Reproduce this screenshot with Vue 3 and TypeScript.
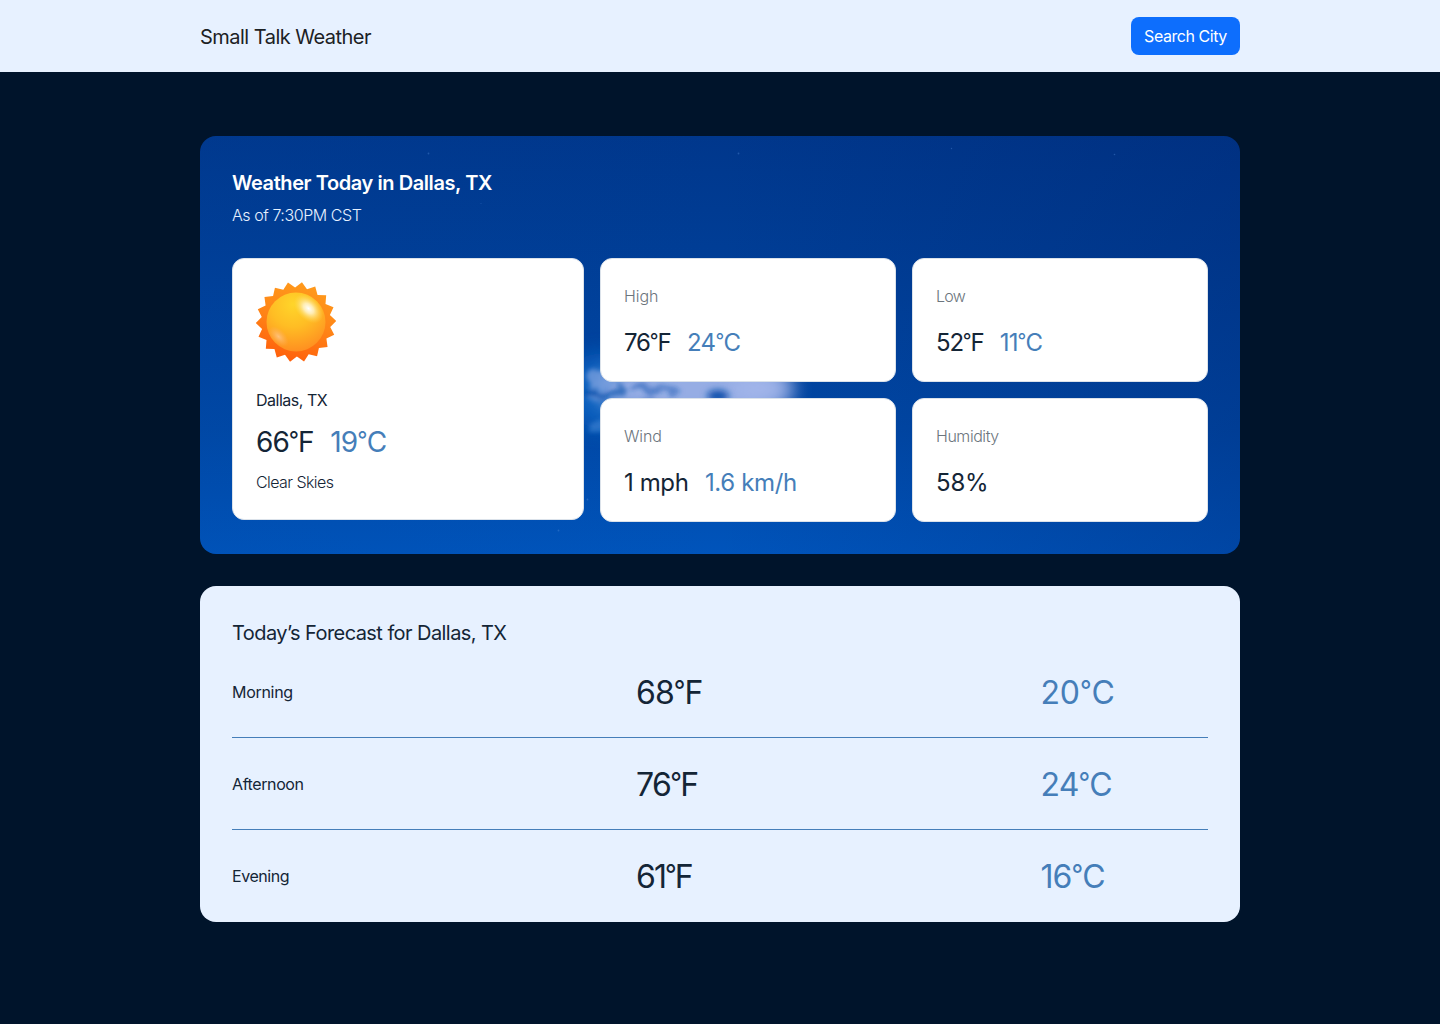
<script setup lang="ts">
interface Label {
  text: string
  tracking: number
}

interface Stat {
  label: Label
  primary: Label
  secondary?: Label
}

interface ForecastRow {
  period: Label
  fahrenheit: Label
  celsius: Label
}

const t = (text: string, tracking = 0): Label => ({ text, tracking })
const track = (l: Label) => ({ letterSpacing: `${l.tracking}px` })

// Splits "76°F" so the degree ring can be set smaller than the digits.
const parts = (l: Label) => l.text.split(/(°)/)

const local = { primary: t('66°F', -0.95), secondary: t('19°C', -0.8) }

const stats: Stat[] = [
  { label: t('High', -0.1), primary: t('76°F', -1.15), secondary: t('24°C', -0.65) },
  { label: t('Low', -0.7), primary: t('52°F', -1.2), secondary: t('11°C', -0.9) },
  { label: t('Wind', -0.1), primary: t('1 mph', -0.4), secondary: t('1.6 km/h', -0.35) },
  { label: t('Humidity', -0.45), primary: t('58%', -0.2) },
]

const forecast: ForecastRow[] = [
  { period: t('Morning', -0.3), fahrenheit: t('68°F', -0.95), celsius: t('20°C', -0.15) },
  { period: t('Afternoon', -0.4), fahrenheit: t('76°F', -1.6), celsius: t('24°C', -0.85) },
  { period: t('Evening', -0.45), fahrenheit: t('61°F', -1.95), celsius: t('16°C', -0.9) },
]

// Sun rays: 18 points around a 40px radius, alternating with shallow valleys.
const rays = Array.from({ length: 18 }, (_, i) => {
  const tip = ((i * 20 + 8.5) * Math.PI) / 180
  const dip = ((i * 20 + 18.5) * Math.PI) / 180
  const at = (a: number, r: number) =>
    `${(40 + r * Math.sin(a)).toFixed(2)},${(40 - r * Math.cos(a)).toFixed(2)}`
  return `${at(tip, 40.3)} ${at(dip, 34.6)}`
}).join(' ')
</script>

<template>
  <div class="page">
    <header class="topbar">
      <div class="topbar-inner">
        <span class="brand">Small Talk Weather</span>
        <button class="search" type="button">Search City</button>
      </div>
    </header>

    <main class="content">
      <section class="today">
        <svg class="sky" width="1040" height="418" viewBox="0 0 1040 418" aria-hidden="true">
          <defs>
            <filter id="haze" x="-50%" y="-80%" width="200%" height="260%">
              <feGaussianBlur stdDeviation="10" />
            </filter>
            <filter id="patch" x="-100%" y="-100%" width="300%" height="300%">
              <feGaussianBlur stdDeviation="3.5" />
            </filter>
            <filter id="wisps" x="-30%" y="-30%" width="160%" height="160%">
              <feTurbulence type="fractalNoise" baseFrequency="0.06 0.1" numOctaves="4" seed="8" result="n" />
              <feDisplacementMap in="SourceGraphic" in2="n" scale="18" xChannelSelector="R" yChannelSelector="G" result="d" />
              <feGaussianBlur in="d" stdDeviation="2.2" />
            </filter>
          </defs>
          <ellipse cx="400" cy="255" rx="34" ry="38" fill="#0a68c6" opacity=".75" filter="url(#haze)" />
          <ellipse cx="495" cy="253" rx="98" ry="30" fill="#9fb3e8" opacity=".95" filter="url(#haze)" />
          <ellipse cx="560" cy="252" rx="28" ry="22" fill="#a6b8ec" opacity=".7" filter="url(#haze)" />
          <g filter="url(#wisps)">
            <path d="M388 240 L404 234 L414 246 L400 252 L388 248Z" fill="#7fa2e0" opacity=".7" />
            <path d="M388 264 L406 256 L404 266 L388 270Z" fill="#6a98de" opacity=".6" />
            <path d="M388 288 L408 282 L406 294 L388 296Z" fill="#4a90dc" opacity=".5" />
            <path d="M384 252 L404 256 L422 249 L428 255 L404 264 L384 264Z" fill="#0a4ca6" opacity=".6" />
            <path d="M426 252 L442 249 L464 256 L450 260Z" fill="#2460b8" opacity=".6" />
            <path d="M446 249 L472 249 L486 256 L468 257Z" fill="#2460b8" opacity=".5" />
            <path d="M436 266 L454 260 L464 266Z" fill="#3f70c2" opacity=".5" />
          </g>
          <ellipse cx="518" cy="260" rx="11" ry="6" fill="#0f50ac" filter="url(#patch)" />
          <g fill="#4f8bd6" opacity=".4">
            <circle cx="228.5" cy="17.5" r=".9" />
            <circle cx="281" cy="67.5" r=".5" />
            <circle cx="538.5" cy="17.5" r=".9" />
            <circle cx="914.5" cy="18.5" r=".8" />
            <circle cx="751.5" cy="12.5" r=".7" />
            <circle cx="387.5" cy="363.5" r=".9" />
            <circle cx="358.5" cy="394.5" r=".9" />
          </g>
        </svg>

        <div class="today-body">
          <h1 class="today-title">Weather Today in Dallas, TX</h1>
          <p class="today-time">As of 7:30PM CST</p>

          <div class="cards">
            <article class="card current">
              <svg class="sun" width="80" height="80" viewBox="0 0 80 80" aria-hidden="true">
                <defs>
                  <linearGradient id="rays" x1="0.65" y1="0" x2="0.35" y2="1">
                    <stop offset="0" stop-color="#ff9b1c" />
                    <stop offset=".5" stop-color="#ff8417" />
                    <stop offset="1" stop-color="#ff5e0b" />
                  </linearGradient>
                  <radialGradient id="disc" cx="0.45" cy="0.2" r="0.85">
                    <stop offset="0" stop-color="#ffd52a" />
                    <stop offset=".45" stop-color="#ffbd24" />
                    <stop offset="1" stop-color="#ff8a20" />
                  </radialGradient>
                  <radialGradient id="shine">
                    <stop offset="0" stop-color="#fff" />
                    <stop offset=".35" stop-color="#fff4cc" stop-opacity=".85" />
                    <stop offset="1" stop-color="#ffdc50" stop-opacity="0" />
                  </radialGradient>
                  <radialGradient id="glow">
                    <stop offset="0" stop-color="#ffc483" stop-opacity=".9" />
                    <stop offset="1" stop-color="#ffb060" stop-opacity="0" />
                  </radialGradient>
                </defs>
                <polygon :points="rays" fill="url(#rays)" />
                <circle cx="40" cy="40" r="29.5" fill="url(#disc)" />
                <ellipse cx="52.5" cy="26.5" rx="17.5" ry="11.5" transform="rotate(45 52.5 26.5)" fill="url(#shine)" />
                <ellipse cx="22.5" cy="54.5" rx="12.5" ry="7" transform="rotate(46 22.5 54.5)" fill="url(#glow)" />
              </svg>
              <p class="place">Dallas, TX</p>
              <p class="reading reading-lg">
                <span :style="track(local.primary)"><span v-for="(p, i) in parts(local.primary)" :key="i" :class="{ deg: p === '°' }">{{ p }}</span></span>
                <span class="c" :style="track(local.secondary)"><span v-for="(p, i) in parts(local.secondary)" :key="i" :class="{ deg: p === '°' }">{{ p }}</span></span>
              </p>
              <p class="sky-text">Clear Skies</p>
            </article>

            <div class="stats">
              <article v-for="s in stats" :key="s.label.text" class="card stat">
                <p class="stat-label" :style="track(s.label)">{{ s.label.text }}</p>
                <p class="reading">
                  <span :style="track(s.primary)"><span v-for="(p, i) in parts(s.primary)" :key="i" :class="{ deg: p === '°' }">{{ p }}</span></span>
                  <span v-if="s.secondary" class="c" :style="track(s.secondary)"><span v-for="(p, i) in parts(s.secondary)" :key="i" :class="{ deg: p === '°' }">{{ p }}</span></span>
                </p>
              </article>
            </div>
          </div>
        </div>
      </section>

      <section class="forecast">
        <h2 class="forecast-title">Today’s Forecast for Dallas, TX</h2>
        <div v-for="r in forecast" :key="r.period.text" class="row">
          <span :style="track(r.period)">{{ r.period.text }}</span>
          <span class="temp" :style="track(r.fahrenheit)"><span v-for="(p, i) in parts(r.fahrenheit)" :key="i" :class="{ deg: p === '°' }">{{ p }}</span></span>
          <span class="temp c" :style="track(r.celsius)"><span v-for="(p, i) in parts(r.celsius)" :key="i" :class="{ deg: p === '°' }">{{ p }}</span></span>
        </div>
      </section>
    </main>
  </div>
</template>

<style>
body {
  margin: 0;
  background: #00142b;
}
</style>

<style scoped>
.page {
  min-height: 1024px;
  background: #00142b;
  color: #142536;
  font-family: Inter, 'Liberation Sans', sans-serif;
  font-size: 16px;
  line-height: 24px;
}

h1,
h2,
p {
  margin: 0;
  font-weight: 400;
}

.topbar {
  height: 72px;
  background: #e7f1ff;
}

.topbar-inner {
  display: flex;
  align-items: center;
  justify-content: space-between;
  width: 1040px;
  height: 72px;
  margin: 0 auto;
}

.brand {
  padding-top: 1px;
  color: #1c2124;
  font-size: 20px;
  line-height: 30px;
  letter-spacing: -0.52px;
}

.search {
  width: 109px;
  height: 38px;
  padding: 0;
  border: 0;
  border-radius: 8px;
  background: #0d6efd;
  color: #fff;
  font: inherit;
  letter-spacing: -0.44px;
}

.content {
  display: flex;
  flex-direction: column;
  gap: 32px;
  width: 1040px;
  margin: 0 auto;
  padding-top: 64px;
}

.today {
  position: relative;
  height: 418px;
  border-radius: 16px;
  overflow: hidden;
  background:
    linear-gradient(90deg, rgba(0, 70, 160, 0.12) 0%, rgba(0, 50, 130, 0) 50%, rgba(0, 30, 100, 0.26) 100%),
    linear-gradient(180deg, #00378c 0%, #003f98 35%, #0048a6 70%, #0054bb 100%);
}

.sky {
  position: absolute;
  inset: 0;
}

.today-body {
  position: relative;
  padding: 32px;
}

.today-title {
  color: #fff;
  font-size: 20px;
  font-weight: 600;
  line-height: 30px;
  letter-spacing: -0.42px;
}

.today-time {
  margin-top: 5px;
  color: #e7f1ff;
  font-weight: 300;
  letter-spacing: -0.44px;
}

.cards {
  display: flex;
  align-items: flex-start;
  gap: 16px;
  margin-top: 31px;
}

.card {
  box-sizing: border-box;
  border: 1px solid #dbe2ea;
  border-radius: 12px;
  background: #fff;
}

.current {
  display: flex;
  flex-direction: column;
  width: 352px;
  height: 262px;
  padding: 23px;
}

.sun {
  display: block;
  margin-bottom: 26px;
}

.place {
  letter-spacing: -0.48px;
}

.reading {
  display: flex;
  gap: 16.5px;
  font-size: 24px;
  line-height: 36px;
}

.reading-lg {
  margin: 9px 0 7px;
  font-size: 28px;
  line-height: 42px;
}

.c {
  color: #457eb9;
}

.deg {
  font-size: 0.8em;
  line-height: 0;
  vertical-align: 0.2em;
}

.sky-text {
  font-weight: 300;
  letter-spacing: -0.57px;
}

.stats {
  display: grid;
  grid-template-columns: 296px 296px;
  grid-auto-rows: 124px;
  gap: 16px;
}

.stat {
  display: flex;
  flex-direction: column;
  gap: 17px;
  padding: 25px 23px 0;
}

.stat-label {
  color: #6c757d;
  font-weight: 300;
}

.forecast {
  box-sizing: border-box;
  height: 336px;
  padding: 32px 32px 22px;
  border-radius: 16px;
  background: #e7f1ff;
}

.forecast-title {
  margin-bottom: 20px;
  font-size: 20px;
  line-height: 30px;
  letter-spacing: -0.57px;
}

.row {
  display: grid;
  grid-template-columns: 405px 404.5px 1fr;
  align-items: center;
  height: 48px;
  padding-bottom: 21px;
  border-bottom: 1px solid #457eb9;
}

.row + .row {
  padding-top: 22px;
}

.row:last-child {
  padding-bottom: 0;
  border-bottom: 0;
}

.temp {
  height: 48px;
  margin-left: -1px;
  font-size: 32px;
  line-height: 50px;
}
</style>
